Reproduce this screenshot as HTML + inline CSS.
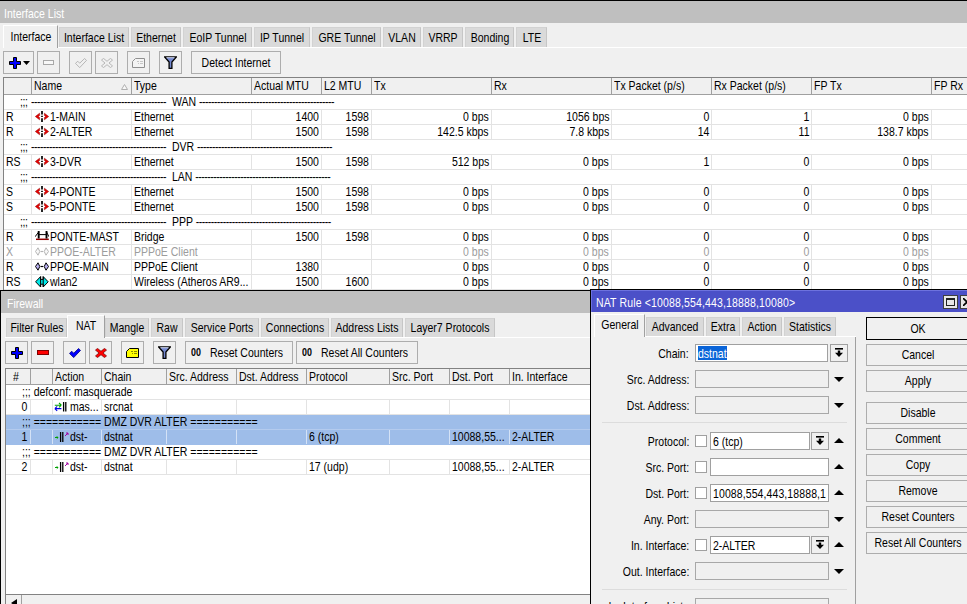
<!DOCTYPE html>
<html><head><meta charset="utf-8"><title>WinBox</title>
<style>
html,body{margin:0;padding:0}
body{width:967px;height:604px;overflow:hidden;position:relative;background:#f0f0f0;
font-family:"Liberation Sans",sans-serif;font-size:13px;line-height:15px;color:#000}
div,span.t,svg{position:absolute;box-sizing:border-box}
span.t{white-space:nowrap;display:block;transform:scaleX(0.808);transform-origin:0 50%}
span.t.r{transform-origin:100% 50%}
span.t.c{transform:translateX(-50%) scaleX(0.808);transform-origin:50% 50%}
.btn{border:1px solid #adadad;background:#f0f0f0}
.tab{border:1px solid #d2d2d2;border-right-color:#c6c6c6;border-bottom:none;background:#dadada}
.tabA{border:1px solid #fff;border-right-color:#a0a0a0;border-bottom:none;background:#f0f0f0}
</style></head><body>
<div style="left:0px;top:0px;width:967px;height:1px;background:#000"></div>
<div style="left:0px;top:1px;width:967px;height:22px;background:#bfbfbf"></div>
<span class="t" style="left:4px;top:6px;color:#fff;">Interface List</span>
<div style="left:3px;top:47px;width:964px;height:1px;background:#fff"></div>
<div class="tabA" style="left:3px;top:25px;width:55px;height:23px;"></div>
<span class="t c" style="left:30.5px;top:29px;">Interface</span>
<div class="tab" style="left:59px;top:27px;width:70px;height:20px;"></div>
<span class="t c" style="left:94.0px;top:30px;">Interface List</span>
<div class="tab" style="left:131px;top:27px;width:50px;height:20px;"></div>
<span class="t c" style="left:156.0px;top:30px;">Ethernet</span>
<div class="tab" style="left:183px;top:27px;width:69px;height:20px;"></div>
<span class="t c" style="left:217.5px;top:30px;">EoIP Tunnel</span>
<div class="tab" style="left:254px;top:27px;width:56px;height:20px;"></div>
<span class="t c" style="left:282.0px;top:30px;">IP Tunnel</span>
<div class="tab" style="left:312px;top:27px;width:69px;height:20px;"></div>
<span class="t c" style="left:346.5px;top:30px;">GRE Tunnel</span>
<div class="tab" style="left:383px;top:27px;width:38px;height:20px;"></div>
<span class="t c" style="left:402.0px;top:30px;">VLAN</span>
<div class="tab" style="left:423px;top:27px;width:40px;height:20px;"></div>
<span class="t c" style="left:443.0px;top:30px;">VRRP</span>
<div class="tab" style="left:465px;top:27px;width:49px;height:20px;"></div>
<span class="t c" style="left:489.5px;top:30px;">Bonding</span>
<div class="tab" style="left:516px;top:27px;width:31px;height:20px;"></div>
<span class="t c" style="left:531.5px;top:30px;">LTE</span>
<div class="btn" style="left:3px;top:51px;width:31px;height:23px;"></div>
<svg style="left:9px;top:57px" width="12" height="12" viewBox="0 0 12 12"><path d="M4.5 .5h3v4h4v3h-4v4h-3v-4h-4v-3h4z" fill="#0000ff" stroke="#000" stroke-width="1"/></svg>
<svg style="left:23px;top:61px" width="7" height="4" viewBox="0 0 7 4"><path d="M0 0h7L3.5 4z" fill="#000"/></svg>
<div class="btn" style="left:37px;top:51px;width:23px;height:23px;"></div>
<svg style="left:43px;top:60px" width="11" height="5" viewBox="0 0 11 5"><rect x=".5" y=".5" width="10" height="4" fill="#f8f8f8" stroke="#a8a8a8"/></svg>
<div class="btn" style="left:69px;top:51px;width:23px;height:23px;"></div>
<svg style="left:75px;top:58px" width="12" height="10" viewBox="0 0 12 10"><path d="M.5 5.4L2.7 3.2 4.7 5.2 9.6 .5 11.5 2.4 4.7 9.6z" fill="none" stroke="#a8a8a8" stroke-width=".8"/></svg>
<div class="btn" style="left:95px;top:51px;width:23px;height:23px;"></div>
<svg style="left:101px;top:58px" width="12" height="10" viewBox="0 0 12 10"><path d="M.5 2.1L2.5.4 6 3.3 9.5.4 11.5 2.1 8 5 11.5 7.9 9.5 9.6 6 6.7 2.5 9.6.5 7.9 4 5z" fill="none" stroke="#a8a8a8" stroke-width=".8"/></svg>
<div class="btn" style="left:127px;top:51px;width:23px;height:23px;"></div>
<svg style="left:132px;top:58px" width="13" height="10" viewBox="0 0 13 10"><path d="M3.5.5h9v9h-12v-6z" fill="#f4f4f4" stroke="#909090" stroke-width="1"/><path d="M5 3.5h2M8 3.5h3M6 5.5h1M8 5.5h3" stroke="#909090" stroke-width="1" opacity=".45"/></svg>
<div class="btn" style="left:159px;top:51px;width:23px;height:23px;"></div>
<svg style="left:164px;top:56px" width="13" height="13" viewBox="0 0 13 13"><path d="M.7 1h11.6L7.9 6v6.3H5.1V6z" fill="#7388d0" stroke="#000" stroke-width="1.3"/><path d="M2.4 1.7h8.2" stroke="#e8ecff" stroke-width=".9"/></svg>
<div class="btn" style="left:191px;top:51px;width:90px;height:23px;"></div>
<span class="t c" style="left:236px;top:55px;">Detect Internet</span>
<div style="left:3px;top:77px;width:964px;height:213px;background:#fff;border-left:1px solid #828282;border-top:1px solid #828282"></div>
<div style="left:4px;top:78px;width:963px;height:16px;background:#f0f0f0"></div>
<div style="left:4px;top:94px;width:963px;height:1px;background:#a0a0a0"></div>
<div style="left:31px;top:78px;width:1px;height:16px;background:#a0a0a0"></div>
<div style="left:131px;top:78px;width:1px;height:16px;background:#a0a0a0"></div>
<div style="left:251px;top:78px;width:1px;height:16px;background:#a0a0a0"></div>
<div style="left:321px;top:78px;width:1px;height:16px;background:#a0a0a0"></div>
<div style="left:371px;top:78px;width:1px;height:16px;background:#a0a0a0"></div>
<div style="left:491px;top:78px;width:1px;height:16px;background:#a0a0a0"></div>
<div style="left:611px;top:78px;width:1px;height:16px;background:#a0a0a0"></div>
<div style="left:711px;top:78px;width:1px;height:16px;background:#a0a0a0"></div>
<div style="left:811px;top:78px;width:1px;height:16px;background:#a0a0a0"></div>
<div style="left:931px;top:78px;width:1px;height:16px;background:#a0a0a0"></div>
<span class="t" style="left:34px;top:78px;">Name</span>
<span class="t" style="left:134px;top:78px;">Type</span>
<span class="t" style="left:254px;top:78px;">Actual MTU</span>
<span class="t" style="left:324px;top:78px;">L2 MTU</span>
<span class="t" style="left:374px;top:78px;">Tx</span>
<span class="t" style="left:494px;top:78px;">Rx</span>
<span class="t" style="left:614px;top:78px;">Tx Packet (p/s)</span>
<span class="t" style="left:714px;top:78px;">Rx Packet (p/s)</span>
<span class="t" style="left:814px;top:78px;">FP Tx</span>
<span class="t" style="left:934px;top:78px;">FP Rx</span>
<svg style="left:121px;top:84px" width="7" height="6" viewBox="0 0 7 6"><path d="M.5 5.5h6L3.5 .5z" fill="#f8f8f8" stroke="#b0b0b0" stroke-width="1"/></svg>
<div style="left:4px;top:109px;width:963px;height:1px;background:#e3e3e3"></div>
<span class="t" style="left:20px;top:94px;letter-spacing:-.5px;">;;;</span>
<span class="t" style="left:31px;top:94px"><span style="letter-spacing:-.615px">---------------------------------------------</span>&nbsp; WAN <span style="letter-spacing:-.615px">---------------------------------------------</span></span>
<div style="left:4px;top:124px;width:963px;height:1px;background:#e3e3e3"></div>
<div style="left:31px;top:110px;width:1px;height:14px;background:#e3e3e3"></div>
<div style="left:131px;top:110px;width:1px;height:14px;background:#e3e3e3"></div>
<div style="left:251px;top:110px;width:1px;height:14px;background:#e3e3e3"></div>
<div style="left:321px;top:110px;width:1px;height:14px;background:#e3e3e3"></div>
<div style="left:371px;top:110px;width:1px;height:14px;background:#e3e3e3"></div>
<div style="left:491px;top:110px;width:1px;height:14px;background:#e3e3e3"></div>
<div style="left:611px;top:110px;width:1px;height:14px;background:#e3e3e3"></div>
<div style="left:711px;top:110px;width:1px;height:14px;background:#e3e3e3"></div>
<div style="left:811px;top:110px;width:1px;height:14px;background:#e3e3e3"></div>
<div style="left:931px;top:110px;width:1px;height:14px;background:#e3e3e3"></div>
<span class="t" style="left:6px;top:109px;">R</span>
<svg style="left:35px;top:111px" width="14" height="11" viewBox="0 0 14 11"><path d="M.3 5.5L4.6 2.2V4.5L3.2 5.5 4.6 6.5V8.8z" fill="#e80000" stroke="#900000" stroke-width=".5"/><path d="M13.7 5.5L9.4 2.2V4.5L10.8 5.5 9.4 6.5V8.8z" fill="#e80000" stroke="#900000" stroke-width=".5"/><path d="M7 0v3.5M7 4.7v1.4M7 7.3V11" stroke="#000" stroke-width="1.7"/></svg>
<span class="t" style="left:50px;top:109px;">1-MAIN</span>
<span class="t" style="left:134px;top:109px;">Ethernet</span>
<span class="t r" style="right:648px;top:109px;">1400</span>
<span class="t r" style="right:598px;top:109px;">1598</span>
<span class="t r" style="right:478px;top:109px;">0 bps</span>
<span class="t r" style="right:358px;top:109px;">1056 bps</span>
<span class="t r" style="right:258px;top:109px;">0</span>
<span class="t r" style="right:158px;top:109px;">1</span>
<span class="t r" style="right:38px;top:109px;">0 bps</span>
<div style="left:4px;top:139px;width:963px;height:1px;background:#e3e3e3"></div>
<div style="left:31px;top:125px;width:1px;height:14px;background:#e3e3e3"></div>
<div style="left:131px;top:125px;width:1px;height:14px;background:#e3e3e3"></div>
<div style="left:251px;top:125px;width:1px;height:14px;background:#e3e3e3"></div>
<div style="left:321px;top:125px;width:1px;height:14px;background:#e3e3e3"></div>
<div style="left:371px;top:125px;width:1px;height:14px;background:#e3e3e3"></div>
<div style="left:491px;top:125px;width:1px;height:14px;background:#e3e3e3"></div>
<div style="left:611px;top:125px;width:1px;height:14px;background:#e3e3e3"></div>
<div style="left:711px;top:125px;width:1px;height:14px;background:#e3e3e3"></div>
<div style="left:811px;top:125px;width:1px;height:14px;background:#e3e3e3"></div>
<div style="left:931px;top:125px;width:1px;height:14px;background:#e3e3e3"></div>
<span class="t" style="left:6px;top:124px;">R</span>
<svg style="left:35px;top:126px" width="14" height="11" viewBox="0 0 14 11"><path d="M.3 5.5L4.6 2.2V4.5L3.2 5.5 4.6 6.5V8.8z" fill="#e80000" stroke="#900000" stroke-width=".5"/><path d="M13.7 5.5L9.4 2.2V4.5L10.8 5.5 9.4 6.5V8.8z" fill="#e80000" stroke="#900000" stroke-width=".5"/><path d="M7 0v3.5M7 4.7v1.4M7 7.3V11" stroke="#000" stroke-width="1.7"/></svg>
<span class="t" style="left:50px;top:124px;">2-ALTER</span>
<span class="t" style="left:134px;top:124px;">Ethernet</span>
<span class="t r" style="right:648px;top:124px;">1500</span>
<span class="t r" style="right:598px;top:124px;">1598</span>
<span class="t r" style="right:478px;top:124px;">142.5 kbps</span>
<span class="t r" style="right:358px;top:124px;">7.8 kbps</span>
<span class="t r" style="right:258px;top:124px;">14</span>
<span class="t r" style="right:158px;top:124px;">11</span>
<span class="t r" style="right:38px;top:124px;">138.7 kbps</span>
<div style="left:4px;top:154px;width:963px;height:1px;background:#e3e3e3"></div>
<span class="t" style="left:20px;top:139px;letter-spacing:-.5px;">;;;</span>
<span class="t" style="left:31px;top:139px"><span style="letter-spacing:-.615px">---------------------------------------------</span>&nbsp; DVR <span style="letter-spacing:-.615px">---------------------------------------------</span></span>
<div style="left:4px;top:169px;width:963px;height:1px;background:#e3e3e3"></div>
<div style="left:31px;top:155px;width:1px;height:14px;background:#e3e3e3"></div>
<div style="left:131px;top:155px;width:1px;height:14px;background:#e3e3e3"></div>
<div style="left:251px;top:155px;width:1px;height:14px;background:#e3e3e3"></div>
<div style="left:321px;top:155px;width:1px;height:14px;background:#e3e3e3"></div>
<div style="left:371px;top:155px;width:1px;height:14px;background:#e3e3e3"></div>
<div style="left:491px;top:155px;width:1px;height:14px;background:#e3e3e3"></div>
<div style="left:611px;top:155px;width:1px;height:14px;background:#e3e3e3"></div>
<div style="left:711px;top:155px;width:1px;height:14px;background:#e3e3e3"></div>
<div style="left:811px;top:155px;width:1px;height:14px;background:#e3e3e3"></div>
<div style="left:931px;top:155px;width:1px;height:14px;background:#e3e3e3"></div>
<span class="t" style="left:6px;top:154px;">RS</span>
<svg style="left:35px;top:156px" width="14" height="11" viewBox="0 0 14 11"><path d="M.3 5.5L4.6 2.2V4.5L3.2 5.5 4.6 6.5V8.8z" fill="#e80000" stroke="#900000" stroke-width=".5"/><path d="M13.7 5.5L9.4 2.2V4.5L10.8 5.5 9.4 6.5V8.8z" fill="#e80000" stroke="#900000" stroke-width=".5"/><path d="M7 0v3.5M7 4.7v1.4M7 7.3V11" stroke="#000" stroke-width="1.7"/></svg>
<span class="t" style="left:50px;top:154px;">3-DVR</span>
<span class="t" style="left:134px;top:154px;">Ethernet</span>
<span class="t r" style="right:648px;top:154px;">1500</span>
<span class="t r" style="right:598px;top:154px;">1598</span>
<span class="t r" style="right:478px;top:154px;">512 bps</span>
<span class="t r" style="right:358px;top:154px;">0 bps</span>
<span class="t r" style="right:258px;top:154px;">1</span>
<span class="t r" style="right:158px;top:154px;">0</span>
<span class="t r" style="right:38px;top:154px;">0 bps</span>
<div style="left:4px;top:184px;width:963px;height:1px;background:#e3e3e3"></div>
<span class="t" style="left:20px;top:169px;letter-spacing:-.5px;">;;;</span>
<span class="t" style="left:31px;top:169px"><span style="letter-spacing:-.615px">---------------------------------------------</span>&nbsp; LAN <span style="letter-spacing:-.615px">---------------------------------------------</span></span>
<div style="left:4px;top:199px;width:963px;height:1px;background:#e3e3e3"></div>
<div style="left:31px;top:185px;width:1px;height:14px;background:#e3e3e3"></div>
<div style="left:131px;top:185px;width:1px;height:14px;background:#e3e3e3"></div>
<div style="left:251px;top:185px;width:1px;height:14px;background:#e3e3e3"></div>
<div style="left:321px;top:185px;width:1px;height:14px;background:#e3e3e3"></div>
<div style="left:371px;top:185px;width:1px;height:14px;background:#e3e3e3"></div>
<div style="left:491px;top:185px;width:1px;height:14px;background:#e3e3e3"></div>
<div style="left:611px;top:185px;width:1px;height:14px;background:#e3e3e3"></div>
<div style="left:711px;top:185px;width:1px;height:14px;background:#e3e3e3"></div>
<div style="left:811px;top:185px;width:1px;height:14px;background:#e3e3e3"></div>
<div style="left:931px;top:185px;width:1px;height:14px;background:#e3e3e3"></div>
<span class="t" style="left:6px;top:184px;">S</span>
<svg style="left:35px;top:186px" width="14" height="11" viewBox="0 0 14 11"><path d="M.3 5.5L4.6 2.2V4.5L3.2 5.5 4.6 6.5V8.8z" fill="#e80000" stroke="#900000" stroke-width=".5"/><path d="M13.7 5.5L9.4 2.2V4.5L10.8 5.5 9.4 6.5V8.8z" fill="#e80000" stroke="#900000" stroke-width=".5"/><path d="M7 0v3.5M7 4.7v1.4M7 7.3V11" stroke="#000" stroke-width="1.7"/></svg>
<span class="t" style="left:50px;top:184px;">4-PONTE</span>
<span class="t" style="left:134px;top:184px;">Ethernet</span>
<span class="t r" style="right:648px;top:184px;">1500</span>
<span class="t r" style="right:598px;top:184px;">1598</span>
<span class="t r" style="right:478px;top:184px;">0 bps</span>
<span class="t r" style="right:358px;top:184px;">0 bps</span>
<span class="t r" style="right:258px;top:184px;">0</span>
<span class="t r" style="right:158px;top:184px;">0</span>
<span class="t r" style="right:38px;top:184px;">0 bps</span>
<div style="left:4px;top:214px;width:963px;height:1px;background:#e3e3e3"></div>
<div style="left:31px;top:200px;width:1px;height:14px;background:#e3e3e3"></div>
<div style="left:131px;top:200px;width:1px;height:14px;background:#e3e3e3"></div>
<div style="left:251px;top:200px;width:1px;height:14px;background:#e3e3e3"></div>
<div style="left:321px;top:200px;width:1px;height:14px;background:#e3e3e3"></div>
<div style="left:371px;top:200px;width:1px;height:14px;background:#e3e3e3"></div>
<div style="left:491px;top:200px;width:1px;height:14px;background:#e3e3e3"></div>
<div style="left:611px;top:200px;width:1px;height:14px;background:#e3e3e3"></div>
<div style="left:711px;top:200px;width:1px;height:14px;background:#e3e3e3"></div>
<div style="left:811px;top:200px;width:1px;height:14px;background:#e3e3e3"></div>
<div style="left:931px;top:200px;width:1px;height:14px;background:#e3e3e3"></div>
<span class="t" style="left:6px;top:199px;">S</span>
<svg style="left:35px;top:201px" width="14" height="11" viewBox="0 0 14 11"><path d="M.3 5.5L4.6 2.2V4.5L3.2 5.5 4.6 6.5V8.8z" fill="#e80000" stroke="#900000" stroke-width=".5"/><path d="M13.7 5.5L9.4 2.2V4.5L10.8 5.5 9.4 6.5V8.8z" fill="#e80000" stroke="#900000" stroke-width=".5"/><path d="M7 0v3.5M7 4.7v1.4M7 7.3V11" stroke="#000" stroke-width="1.7"/></svg>
<span class="t" style="left:50px;top:199px;">5-PONTE</span>
<span class="t" style="left:134px;top:199px;">Ethernet</span>
<span class="t r" style="right:648px;top:199px;">1500</span>
<span class="t r" style="right:598px;top:199px;">1598</span>
<span class="t r" style="right:478px;top:199px;">0 bps</span>
<span class="t r" style="right:358px;top:199px;">0 bps</span>
<span class="t r" style="right:258px;top:199px;">0</span>
<span class="t r" style="right:158px;top:199px;">0</span>
<span class="t r" style="right:38px;top:199px;">0 bps</span>
<div style="left:4px;top:229px;width:963px;height:1px;background:#e3e3e3"></div>
<span class="t" style="left:20px;top:214px;letter-spacing:-.5px;">;;;</span>
<span class="t" style="left:31px;top:214px"><span style="letter-spacing:-.615px">---------------------------------------------</span>&nbsp; PPP <span style="letter-spacing:-.615px">---------------------------------------------</span></span>
<div style="left:4px;top:244px;width:963px;height:1px;background:#e3e3e3"></div>
<div style="left:31px;top:230px;width:1px;height:14px;background:#e3e3e3"></div>
<div style="left:131px;top:230px;width:1px;height:14px;background:#e3e3e3"></div>
<div style="left:251px;top:230px;width:1px;height:14px;background:#e3e3e3"></div>
<div style="left:321px;top:230px;width:1px;height:14px;background:#e3e3e3"></div>
<div style="left:371px;top:230px;width:1px;height:14px;background:#e3e3e3"></div>
<div style="left:491px;top:230px;width:1px;height:14px;background:#e3e3e3"></div>
<div style="left:611px;top:230px;width:1px;height:14px;background:#e3e3e3"></div>
<div style="left:711px;top:230px;width:1px;height:14px;background:#e3e3e3"></div>
<div style="left:811px;top:230px;width:1px;height:14px;background:#e3e3e3"></div>
<div style="left:931px;top:230px;width:1px;height:14px;background:#e3e3e3"></div>
<span class="t" style="left:6px;top:229px;">R</span>
<svg style="left:35px;top:231px" width="14" height="10" viewBox="0 0 14 10"><path d="M1 8.3h12.8" stroke="#900000" stroke-width="1.5"/><path d="M3.7 0v7.6M11.5 0v7.6" stroke="#000" stroke-width="1.9"/><path d="M0 5.8L3.7 1M11.5 1L14 5.8M3.7 3.6h7.8" fill="none" stroke="#000" stroke-width="1"/></svg>
<span class="t" style="left:50px;top:229px;">PONTE-MAST</span>
<span class="t" style="left:134px;top:229px;">Bridge</span>
<span class="t r" style="right:648px;top:229px;">1500</span>
<span class="t r" style="right:598px;top:229px;">1598</span>
<span class="t r" style="right:478px;top:229px;">0 bps</span>
<span class="t r" style="right:358px;top:229px;">0 bps</span>
<span class="t r" style="right:258px;top:229px;">0</span>
<span class="t r" style="right:158px;top:229px;">0</span>
<span class="t r" style="right:38px;top:229px;">0 bps</span>
<div style="left:4px;top:259px;width:963px;height:1px;background:#e3e3e3"></div>
<div style="left:31px;top:245px;width:1px;height:14px;background:#e3e3e3"></div>
<div style="left:131px;top:245px;width:1px;height:14px;background:#e3e3e3"></div>
<div style="left:251px;top:245px;width:1px;height:14px;background:#e3e3e3"></div>
<div style="left:321px;top:245px;width:1px;height:14px;background:#e3e3e3"></div>
<div style="left:371px;top:245px;width:1px;height:14px;background:#e3e3e3"></div>
<div style="left:491px;top:245px;width:1px;height:14px;background:#e3e3e3"></div>
<div style="left:611px;top:245px;width:1px;height:14px;background:#e3e3e3"></div>
<div style="left:711px;top:245px;width:1px;height:14px;background:#e3e3e3"></div>
<div style="left:811px;top:245px;width:1px;height:14px;background:#e3e3e3"></div>
<div style="left:931px;top:245px;width:1px;height:14px;background:#e3e3e3"></div>
<span class="t" style="left:6px;top:244px;color:#9c9c9c;">X</span>
<svg style="left:35px;top:247px" width="14" height="9" viewBox="0 0 14 9"><path d="M.5 4.5L3 .8 4.8 4.5 3 8.2z" fill="#f8f8f8" stroke="#b4b4b4" stroke-width="1"/><path d="M13.5 4.5L11 .8 9.2 4.5 11 8.2z" fill="#f8f8f8" stroke="#b4b4b4" stroke-width="1"/><path d="M5.6 4.5h2.6" stroke="#b4b4b4" stroke-width="1.2"/></svg>
<span class="t" style="left:50px;top:244px;color:#9c9c9c;">PPOE-ALTER</span>
<span class="t" style="left:134px;top:244px;color:#9c9c9c;">PPPoE Client</span>
<span class="t r" style="right:478px;top:244px;color:#9c9c9c;">0 bps</span>
<span class="t r" style="right:358px;top:244px;color:#9c9c9c;">0 bps</span>
<span class="t r" style="right:258px;top:244px;color:#9c9c9c;">0</span>
<span class="t r" style="right:158px;top:244px;color:#9c9c9c;">0</span>
<span class="t r" style="right:38px;top:244px;color:#9c9c9c;">0 bps</span>
<div style="left:4px;top:274px;width:963px;height:1px;background:#e3e3e3"></div>
<div style="left:31px;top:260px;width:1px;height:14px;background:#e3e3e3"></div>
<div style="left:131px;top:260px;width:1px;height:14px;background:#e3e3e3"></div>
<div style="left:251px;top:260px;width:1px;height:14px;background:#e3e3e3"></div>
<div style="left:321px;top:260px;width:1px;height:14px;background:#e3e3e3"></div>
<div style="left:371px;top:260px;width:1px;height:14px;background:#e3e3e3"></div>
<div style="left:491px;top:260px;width:1px;height:14px;background:#e3e3e3"></div>
<div style="left:611px;top:260px;width:1px;height:14px;background:#e3e3e3"></div>
<div style="left:711px;top:260px;width:1px;height:14px;background:#e3e3e3"></div>
<div style="left:811px;top:260px;width:1px;height:14px;background:#e3e3e3"></div>
<div style="left:931px;top:260px;width:1px;height:14px;background:#e3e3e3"></div>
<span class="t" style="left:6px;top:259px;">R</span>
<svg style="left:35px;top:262px" width="14" height="9" viewBox="0 0 14 9"><path d="M.5 4.5L3 .8 4.8 4.5 3 8.2z" fill="#b8b0f0" stroke="#000" stroke-width="1"/><path d="M13.5 4.5L11 .8 9.2 4.5 11 8.2z" fill="#b8b0f0" stroke="#000" stroke-width="1"/><path d="M5.6 4.5h2.6" stroke="#000" stroke-width="1.2"/></svg>
<span class="t" style="left:50px;top:259px;">PPOE-MAIN</span>
<span class="t" style="left:134px;top:259px;">PPPoE Client</span>
<span class="t r" style="right:648px;top:259px;">1380</span>
<span class="t r" style="right:478px;top:259px;">0 bps</span>
<span class="t r" style="right:358px;top:259px;">0 bps</span>
<span class="t r" style="right:258px;top:259px;">0</span>
<span class="t r" style="right:158px;top:259px;">0</span>
<span class="t r" style="right:38px;top:259px;">0 bps</span>
<div style="left:4px;top:289px;width:963px;height:1px;background:#e3e3e3"></div>
<div style="left:31px;top:275px;width:1px;height:14px;background:#e3e3e3"></div>
<div style="left:131px;top:275px;width:1px;height:14px;background:#e3e3e3"></div>
<div style="left:251px;top:275px;width:1px;height:14px;background:#e3e3e3"></div>
<div style="left:321px;top:275px;width:1px;height:14px;background:#e3e3e3"></div>
<div style="left:371px;top:275px;width:1px;height:14px;background:#e3e3e3"></div>
<div style="left:491px;top:275px;width:1px;height:14px;background:#e3e3e3"></div>
<div style="left:611px;top:275px;width:1px;height:14px;background:#e3e3e3"></div>
<div style="left:711px;top:275px;width:1px;height:14px;background:#e3e3e3"></div>
<div style="left:811px;top:275px;width:1px;height:14px;background:#e3e3e3"></div>
<div style="left:931px;top:275px;width:1px;height:14px;background:#e3e3e3"></div>
<span class="t" style="left:6px;top:274px;">RS</span>
<svg style="left:35px;top:276px" width="14" height="12" viewBox="0 0 14 12"><path d="M.6 5.8L5.6 .6V3.4H8.2V.6L13.2 5.8 8.2 11V8.2H5.6V11z" fill="#00e8e8" stroke="#000" stroke-width="1"/><path d="M5.6 .6V11M8.2 .6V11" stroke="#000" stroke-width="1"/></svg>
<span class="t" style="left:50px;top:274px;">wlan2</span>
<span class="t" style="left:134px;top:274px;">Wireless (Atheros AR9...</span>
<span class="t r" style="right:648px;top:274px;">1500</span>
<span class="t r" style="right:598px;top:274px;">1600</span>
<span class="t r" style="right:478px;top:274px;">0 bps</span>
<span class="t r" style="right:358px;top:274px;">0 bps</span>
<span class="t r" style="right:258px;top:274px;">0</span>
<span class="t r" style="right:158px;top:274px;">0</span>
<span class="t r" style="right:38px;top:274px;">0 bps</span>
<div style="left:0px;top:290px;width:592px;height:314px;background:#f0f0f0;border-left:1px solid #000;border-top:1px solid #000"></div>
<div style="left:1px;top:291px;width:590px;height:22px;background:#bfbfbf"></div>
<span class="t" style="left:7px;top:296px;color:#fff;">Firewall</span>
<div style="left:5px;top:337px;width:585px;height:1px;background:#fff"></div>
<div class="tab" style="left:6px;top:318px;width:61px;height:19px;"></div>
<span class="t c" style="left:36.5px;top:320px;">Filter Rules</span>
<div class="tabA" style="left:67px;top:315px;width:38px;height:23px;"></div>
<span class="t c" style="left:86.0px;top:318px;">NAT</span>
<div class="tab" style="left:105px;top:318px;width:44px;height:19px;"></div>
<span class="t c" style="left:127.0px;top:320px;">Mangle</span>
<div class="tab" style="left:151px;top:318px;width:32px;height:19px;"></div>
<span class="t c" style="left:167.0px;top:320px;">Raw</span>
<div class="tab" style="left:185px;top:318px;width:74px;height:19px;"></div>
<span class="t c" style="left:222.0px;top:320px;">Service Ports</span>
<div class="tab" style="left:261px;top:318px;width:68px;height:19px;"></div>
<span class="t c" style="left:295.0px;top:320px;">Connections</span>
<div class="tab" style="left:331px;top:318px;width:72px;height:19px;"></div>
<span class="t c" style="left:367.0px;top:320px;">Address Lists</span>
<div class="tab" style="left:405px;top:318px;width:90px;height:19px;"></div>
<span class="t c" style="left:450.0px;top:320px;">Layer7 Protocols</span>
<div class="btn" style="left:5px;top:341px;width:23px;height:23px;"></div>
<svg style="left:11px;top:347px" width="12" height="12" viewBox="0 0 12 12"><path d="M4.5 .5h3v4h4v3h-4v4h-3v-4h-4v-3h4z" fill="#0000ff" stroke="#000" stroke-width="1"/></svg>
<div class="btn" style="left:31px;top:341px;width:23px;height:23px;"></div>
<svg style="left:37px;top:350px" width="12" height="5" viewBox="0 0 12 5"><rect x=".5" y=".5" width="11" height="4" fill="#ff0000" stroke="#800000"/></svg>
<div class="btn" style="left:63px;top:341px;width:23px;height:23px;"></div>
<svg style="left:69px;top:348px" width="12" height="10" viewBox="0 0 12 10"><path d="M.5 5.4L2.7 3.2 4.7 5.2 9.6 .5 11.5 2.4 4.7 9.6z" fill="#0000ff" stroke="#000080" stroke-width=".8"/></svg>
<div class="btn" style="left:89px;top:341px;width:23px;height:23px;"></div>
<svg style="left:95px;top:348px" width="12" height="10" viewBox="0 0 12 10"><path d="M.5 2.1L2.5.4 6 3.3 9.5.4 11.5 2.1 8 5 11.5 7.9 9.5 9.6 6 6.7 2.5 9.6.5 7.9 4 5z" fill="#ff0000" stroke="#800000" stroke-width=".8"/></svg>
<div class="btn" style="left:121px;top:341px;width:23px;height:23px;"></div>
<svg style="left:126px;top:348px" width="13" height="10" viewBox="0 0 13 10"><path d="M3.5.5h9v9h-12v-6z" fill="#ffff00" stroke="#000" stroke-width="1"/><path d="M5 3.5h2M8 3.5h3M6 5.5h1M8 5.5h3" stroke="#000" stroke-width="1" opacity=".45"/></svg>
<div class="btn" style="left:153px;top:341px;width:23px;height:23px;"></div>
<svg style="left:158px;top:346px" width="13" height="13" viewBox="0 0 13 13"><path d="M.7 1h11.6L7.9 6v6.3H5.1V6z" fill="#7388d0" stroke="#000" stroke-width="1.3"/><path d="M2.4 1.7h8.2" stroke="#e8ecff" stroke-width=".9"/></svg>
<div class="btn" style="left:185px;top:341px;width:108px;height:23px;"></div>
<span class="t" style="left:191px;top:345px;font-weight:bold;font-size:11px;">00</span>
<span class="t" style="left:210px;top:345px;">Reset Counters</span>
<div class="btn" style="left:296px;top:341px;width:122px;height:23px;"></div>
<span class="t" style="left:302px;top:345px;font-weight:bold;font-size:11px;">00</span>
<span class="t" style="left:321px;top:345px;">Reset All Counters</span>
<div style="left:5px;top:368px;width:585px;height:226px;background:#fff;border-left:1px solid #828282;border-top:1px solid #828282"></div>
<div style="left:6px;top:369px;width:584px;height:15px;background:#f0f0f0"></div>
<div style="left:6px;top:384px;width:584px;height:1px;background:#a0a0a0"></div>
<div style="left:30px;top:369px;width:1px;height:15px;background:#a0a0a0"></div>
<div style="left:52px;top:369px;width:1px;height:15px;background:#a0a0a0"></div>
<div style="left:101px;top:369px;width:1px;height:15px;background:#a0a0a0"></div>
<div style="left:166px;top:369px;width:1px;height:15px;background:#a0a0a0"></div>
<div style="left:236px;top:369px;width:1px;height:15px;background:#a0a0a0"></div>
<div style="left:306px;top:369px;width:1px;height:15px;background:#a0a0a0"></div>
<div style="left:389px;top:369px;width:1px;height:15px;background:#a0a0a0"></div>
<div style="left:449px;top:369px;width:1px;height:15px;background:#a0a0a0"></div>
<div style="left:509px;top:369px;width:1px;height:15px;background:#a0a0a0"></div>
<span class="t" style="left:13px;top:369px;">#</span>
<span class="t" style="left:55px;top:369px;">Action</span>
<span class="t" style="left:104px;top:369px;">Chain</span>
<span class="t" style="left:169px;top:369px;">Src. Address</span>
<span class="t" style="left:239px;top:369px;">Dst. Address</span>
<span class="t" style="left:309px;top:369px;">Protocol</span>
<span class="t" style="left:392px;top:369px;">Src. Port</span>
<span class="t" style="left:452px;top:369px;">Dst. Port</span>
<span class="t" style="left:512px;top:369px;">In. Interface</span>
<div style="left:6px;top:399px;width:584px;height:1px;background:#e3e3e3"></div>
<span class="t" style="left:22px;top:384px;">;;; defconf: masquerade</span>
<div style="left:6px;top:414px;width:584px;height:1px;background:#e3e3e3"></div>
<div style="left:30px;top:400px;width:1px;height:14px;background:#e3e3e3"></div>
<div style="left:52px;top:400px;width:1px;height:14px;background:#e3e3e3"></div>
<div style="left:101px;top:400px;width:1px;height:14px;background:#e3e3e3"></div>
<div style="left:166px;top:400px;width:1px;height:14px;background:#e3e3e3"></div>
<div style="left:236px;top:400px;width:1px;height:14px;background:#e3e3e3"></div>
<div style="left:306px;top:400px;width:1px;height:14px;background:#e3e3e3"></div>
<div style="left:389px;top:400px;width:1px;height:14px;background:#e3e3e3"></div>
<div style="left:449px;top:400px;width:1px;height:14px;background:#e3e3e3"></div>
<div style="left:509px;top:400px;width:1px;height:14px;background:#e3e3e3"></div>
<span class="t r" style="right:940px;top:399px;">0</span>
<svg style="left:54px;top:402px" width="13" height="10" viewBox="0 0 13 10"><path d="M.8 3.2h6M7.4 3.2L5 1M7.4 3.2L5 5.4" stroke="#00a000" fill="none" stroke-width="1.1"/><path d="M7.4 6.6h-6M.8 6.6L3.2 4.4M.8 6.6L3.2 8.8" stroke="#0000e0" fill="none" stroke-width="1.1"/><path d="M9.6 0v9.5M11.8 0v9.5" stroke="#000" stroke-width="1.3"/></svg>
<span class="t" style="left:70px;top:399px;">mas...</span>
<span class="t" style="left:104px;top:399px;">srcnat</span>
<div style="left:6px;top:415px;width:584px;height:15px;background:#9ebde9"></div>
<div style="left:6px;top:429px;width:584px;height:1px;background:#b4cbee"></div>
<span class="t" style="left:22px;top:414px;">;;; =========== DMZ DVR ALTER ===========</span>
<div style="left:6px;top:430px;width:584px;height:15px;background:#9ebde9"></div>
<div style="left:30px;top:430px;width:1px;height:14px;background:#d4e2f6"></div>
<div style="left:52px;top:430px;width:1px;height:14px;background:#d4e2f6"></div>
<div style="left:101px;top:430px;width:1px;height:14px;background:#d4e2f6"></div>
<div style="left:166px;top:430px;width:1px;height:14px;background:#d4e2f6"></div>
<div style="left:236px;top:430px;width:1px;height:14px;background:#d4e2f6"></div>
<div style="left:306px;top:430px;width:1px;height:14px;background:#d4e2f6"></div>
<div style="left:389px;top:430px;width:1px;height:14px;background:#d4e2f6"></div>
<div style="left:449px;top:430px;width:1px;height:14px;background:#d4e2f6"></div>
<div style="left:509px;top:430px;width:1px;height:14px;background:#d4e2f6"></div>
<span class="t r" style="right:940px;top:429px;">1</span>
<svg style="left:55px;top:432px" width="14" height="10" viewBox="0 0 14 10"><path d="M0 5.5h3M3 5.5L1.8 4.3M3 5.5L1.8 6.7" stroke="#00a000" fill="none" stroke-width="1"/><path d="M5.6 0v10M7.8 0v10" stroke="#000" stroke-width="1.3"/><path d="M10 4L13 1M13 1h-2M13 1v2" stroke="#a000a0" fill="none" stroke-width="1"/></svg>
<span class="t" style="left:70px;top:429px;">dst-</span>
<span class="t" style="left:104px;top:429px;">dstnat</span>
<span class="t" style="left:309px;top:429px;">6 (tcp)</span>
<span class="t" style="left:452px;top:429px;">10088,55...</span>
<span class="t" style="left:512px;top:429px;">2-ALTER</span>
<div style="left:6px;top:459px;width:584px;height:1px;background:#e3e3e3"></div>
<span class="t" style="left:22px;top:444px;">;;; =========== DMZ DVR ALTER ===========</span>
<div style="left:6px;top:474px;width:584px;height:1px;background:#e3e3e3"></div>
<div style="left:30px;top:460px;width:1px;height:14px;background:#e3e3e3"></div>
<div style="left:52px;top:460px;width:1px;height:14px;background:#e3e3e3"></div>
<div style="left:101px;top:460px;width:1px;height:14px;background:#e3e3e3"></div>
<div style="left:166px;top:460px;width:1px;height:14px;background:#e3e3e3"></div>
<div style="left:236px;top:460px;width:1px;height:14px;background:#e3e3e3"></div>
<div style="left:306px;top:460px;width:1px;height:14px;background:#e3e3e3"></div>
<div style="left:389px;top:460px;width:1px;height:14px;background:#e3e3e3"></div>
<div style="left:449px;top:460px;width:1px;height:14px;background:#e3e3e3"></div>
<div style="left:509px;top:460px;width:1px;height:14px;background:#e3e3e3"></div>
<span class="t r" style="right:940px;top:459px;">2</span>
<svg style="left:55px;top:462px" width="14" height="10" viewBox="0 0 14 10"><path d="M0 5.5h3M3 5.5L1.8 4.3M3 5.5L1.8 6.7" stroke="#00a000" fill="none" stroke-width="1"/><path d="M5.6 0v10M7.8 0v10" stroke="#000" stroke-width="1.3"/><path d="M10 4L13 1M13 1h-2M13 1v2" stroke="#a000a0" fill="none" stroke-width="1"/></svg>
<span class="t" style="left:70px;top:459px;">dst-</span>
<span class="t" style="left:104px;top:459px;">dstnat</span>
<span class="t" style="left:309px;top:459px;">17 (udp)</span>
<span class="t" style="left:452px;top:459px;">10088,55...</span>
<span class="t" style="left:512px;top:459px;">2-ALTER</span>
<div style="left:5px;top:594px;width:585px;height:10px;background:#f0f0f0;border-top:1px solid #828282;border-left:1px solid #828282"></div>
<div style="left:6px;top:595px;width:16px;height:9px;background:#f0f0f0;border-right:1px solid #a0a0a0"></div>
<svg style="left:11px;top:599px" width="6" height="8" viewBox="0 0 6 8"><path d="M0 4L6 0V8z" fill="#000"/></svg>
<div style="left:590px;top:289px;width:377px;height:315px;background:#f0f0f0;border-left:1px solid #000;border-top:1px solid #000"></div>
<div style="left:591px;top:290px;width:376px;height:22px;background:#4b50c8;border-top:1px solid #6d72de;border-left:1px solid #6d72de"></div>
<span class="t" style="left:596px;top:295px;color:#fff;letter-spacing:.18px;">NAT Rule &lt;10088,554,443,18888,10080&gt;</span>
<div style="left:943px;top:295px;width:15px;height:14px;background:#e8e8e8;border:1px solid #404040"></div>
<div style="left:946px;top:298px;width:9px;height:8px;border:1px solid #222;border-top-width:2px"></div>
<div style="left:960px;top:295px;width:15px;height:14px;background:#e8e8e8;border:1px solid #404040"></div>
<svg style="left:963px;top:298px" width="8" height="8" viewBox="0 0 8 8"><path d="M0 0L8 8M8 0L0 8" stroke="#000" stroke-width="1.6"/></svg>
<div style="left:594px;top:336px;width:262px;height:1px;background:#fff"></div>
<div style="left:855px;top:337px;width:1px;height:267px;background:#a0a0a0"></div>
<div class="tabA" style="left:594px;top:314px;width:51px;height:23px;"></div>
<span class="t c" style="left:619.5px;top:317px;">General</span>
<div class="tab" style="left:646px;top:317px;width:58px;height:19px;"></div>
<span class="t c" style="left:675.0px;top:319px;">Advanced</span>
<div class="tab" style="left:706px;top:317px;width:34px;height:19px;"></div>
<span class="t c" style="left:723.0px;top:319px;">Extra</span>
<div class="tab" style="left:742px;top:317px;width:40px;height:19px;"></div>
<span class="t c" style="left:762.0px;top:319px;">Action</span>
<div class="tab" style="left:784px;top:317px;width:52px;height:19px;"></div>
<span class="t c" style="left:810.0px;top:319px;">Statistics</span>
<span class="t r" style="right:278px;top:346px;">Chain:</span>
<div style="left:695px;top:344px;width:133px;height:18px;background:#fff;border:1px solid #a0a0a0"></div>
<div style="left:698px;top:346px;width:29px;height:14px;background:#0a64d8"></div>
<span class="t" style="left:698px;top:346px;color:#fff;">dstnat</span>
<div style="left:830px;top:344px;width:18px;height:18px;background:#f0f0f0;border:1px solid #a0a0a0"></div>
<svg style="left:835px;top:348px" width="8" height="9" viewBox="0 0 8 9"><path d="M0 .8h8" stroke="#000" stroke-width="1.6"/><path d="M2.8 2.4h2.4v2.4h2.8L4 9 0 4.8h2.8z" fill="#000"/></svg>
<span class="t r" style="right:278px;top:372px;">Src. Address:</span>
<div style="left:695px;top:370px;width:134px;height:18px;background:#f0f0f0;border:1px solid #a8a8a8"></div>
<svg style="left:834px;top:377px" width="10" height="5" viewBox="0 0 10 5"><path d="M0 0h10L5 5z" fill="#000"/></svg>
<span class="t r" style="right:278px;top:398px;">Dst. Address:</span>
<div style="left:695px;top:396px;width:134px;height:18px;background:#f0f0f0;border:1px solid #a8a8a8"></div>
<svg style="left:834px;top:403px" width="10" height="5" viewBox="0 0 10 5"><path d="M0 0h10L5 5z" fill="#000"/></svg>
<div style="left:602px;top:422px;width:245px;height:1px;background:#dcdcdc"></div>
<span class="t r" style="right:278px;top:434px;">Protocol:</span>
<div style="left:695px;top:435px;width:12px;height:12px;background:#fff;border:1px solid #a0a0a0"></div>
<div style="left:710px;top:432px;width:100px;height:18px;background:#fff;border:1px solid #a0a0a0"></div>
<span class="t" style="left:713px;top:434px;">6 (tcp)</span>
<div style="left:811px;top:432px;width:18px;height:18px;background:#f0f0f0;border:1px solid #a0a0a0"></div>
<svg style="left:816px;top:436px" width="8" height="9" viewBox="0 0 8 9"><path d="M0 .8h8" stroke="#000" stroke-width="1.6"/><path d="M2.8 2.4h2.4v2.4h2.8L4 9 0 4.8h2.8z" fill="#000"/></svg>
<svg style="left:834px;top:438px" width="10" height="5" viewBox="0 0 10 5"><path d="M0 5h10L5 0z" fill="#000"/></svg>
<span class="t r" style="right:278px;top:460px;">Src. Port:</span>
<div style="left:695px;top:461px;width:12px;height:12px;background:#fff;border:1px solid #a0a0a0"></div>
<div style="left:710px;top:458px;width:119px;height:18px;background:#fff;border:1px solid #a0a0a0"></div>
<svg style="left:834px;top:464px" width="10" height="5" viewBox="0 0 10 5"><path d="M0 5h10L5 0z" fill="#000"/></svg>
<span class="t r" style="right:278px;top:486px;">Dst. Port:</span>
<div style="left:695px;top:487px;width:12px;height:12px;background:#fff;border:1px solid #a0a0a0"></div>
<div style="left:710px;top:484px;width:119px;height:18px;background:#fff;border:1px solid #a0a0a0"></div>
<span class="t" style="left:713px;top:486px;letter-spacing:0.12px;">10088,554,443,18888,1</span>
<svg style="left:834px;top:490px" width="10" height="5" viewBox="0 0 10 5"><path d="M0 5h10L5 0z" fill="#000"/></svg>
<span class="t r" style="right:278px;top:512px;">Any. Port:</span>
<div style="left:695px;top:510px;width:134px;height:18px;background:#f0f0f0;border:1px solid #a8a8a8"></div>
<svg style="left:834px;top:517px" width="10" height="5" viewBox="0 0 10 5"><path d="M0 0h10L5 5z" fill="#000"/></svg>
<span class="t r" style="right:278px;top:538px;">In. Interface:</span>
<div style="left:695px;top:539px;width:12px;height:12px;background:#fff;border:1px solid #a0a0a0"></div>
<div style="left:710px;top:536px;width:100px;height:18px;background:#fff;border:1px solid #a0a0a0"></div>
<span class="t" style="left:713px;top:538px;">2-ALTER</span>
<div style="left:811px;top:536px;width:18px;height:18px;background:#f0f0f0;border:1px solid #a0a0a0"></div>
<svg style="left:816px;top:540px" width="8" height="9" viewBox="0 0 8 9"><path d="M0 .8h8" stroke="#000" stroke-width="1.6"/><path d="M2.8 2.4h2.4v2.4h2.8L4 9 0 4.8h2.8z" fill="#000"/></svg>
<svg style="left:834px;top:542px" width="10" height="5" viewBox="0 0 10 5"><path d="M0 5h10L5 0z" fill="#000"/></svg>
<span class="t r" style="right:278px;top:564px;">Out. Interface:</span>
<div style="left:695px;top:562px;width:134px;height:18px;background:#f0f0f0;border:1px solid #a8a8a8"></div>
<svg style="left:834px;top:569px" width="10" height="5" viewBox="0 0 10 5"><path d="M0 0h10L5 5z" fill="#000"/></svg>
<div style="left:602px;top:589px;width:245px;height:1px;background:#dcdcdc"></div>
<span class="t r" style="right:281px;top:599px;">In. Interface List:</span>
<div style="left:695px;top:598px;width:134px;height:18px;background:#f0f0f0;border:1px solid #a8a8a8"></div>
<div style="left:866px;top:317px;width:110px;height:23px;background:#f0f0f0;border:1px solid #000"></div>
<span class="t c" style="left:918px;top:321px;">OK</span>
<div style="left:866px;top:344px;width:110px;height:22px;background:#f0f0f0;border:1px solid #adadad"></div>
<span class="t c" style="left:918px;top:347px;">Cancel</span>
<div style="left:866px;top:370px;width:110px;height:22px;background:#f0f0f0;border:1px solid #adadad"></div>
<span class="t c" style="left:918px;top:373px;">Apply</span>
<div style="left:866px;top:402px;width:110px;height:22px;background:#f0f0f0;border:1px solid #adadad"></div>
<span class="t c" style="left:918px;top:405px;">Disable</span>
<div style="left:866px;top:428px;width:110px;height:22px;background:#f0f0f0;border:1px solid #adadad"></div>
<span class="t c" style="left:918px;top:431px;">Comment</span>
<div style="left:866px;top:454px;width:110px;height:22px;background:#f0f0f0;border:1px solid #adadad"></div>
<span class="t c" style="left:918px;top:457px;">Copy</span>
<div style="left:866px;top:480px;width:110px;height:22px;background:#f0f0f0;border:1px solid #adadad"></div>
<span class="t c" style="left:918px;top:483px;">Remove</span>
<div style="left:866px;top:506px;width:110px;height:22px;background:#f0f0f0;border:1px solid #adadad"></div>
<span class="t c" style="left:918px;top:509px;">Reset Counters</span>
<div style="left:866px;top:532px;width:110px;height:22px;background:#f0f0f0;border:1px solid #adadad"></div>
<span class="t c" style="left:918px;top:535px;">Reset All Counters</span>
</body></html>
